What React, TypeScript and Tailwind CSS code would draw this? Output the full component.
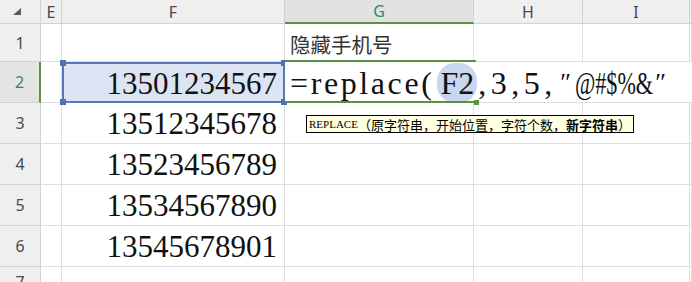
import React from "react";

const line = "border-r border-b border-[#dedede]";
const hdr = "bg-[#efefef] border-r border-b border-[#d2d2d2] flex items-center justify-center text-[16px] text-[#4a4a4a]";
const sans = { fontFamily: '"Noto Sans", "Noto Sans CJK SC", sans-serif' };
const serif = { fontFamily: '"Liberation Serif", serif' };

const numbers = ["13501234567", "13512345678", "13523456789", "13534567890", "13545678901"];

function Handle({ cls }: { cls: string }) {
  return <div className={`absolute w-[6px] h-[6px] bg-[#4f70b6] ${cls}`} />;
}

export default function App() {
  return (
    <div className="relative w-[692px] h-[282px] overflow-hidden bg-white" style={sans}>
      <div className="grid grid-cols-[41px_21px_223px_189px_109px_107px_1fr] grid-rows-[24px_38px_41px_41px_41px_41px_41px_41px]">
        {/* header row */}
        <div className={hdr}>
          <svg width="10" height="8" viewBox="0 0 10 8" className="mt-[1px] ml-[-6px]">
            <polygon points="9,0 9,7 1,7" fill="#5c5c5c" />
          </svg>
        </div>
        <div className={hdr}>E</div>
        <div className={hdr}>F</div>
        <div className="bg-[#e2e2e2] border-r border-[#d2d2d2] border-b-2 border-b-[#5a9440] flex items-center justify-center text-[16px] text-[#2c8a6c]">G</div>
        <div className={hdr}>H</div>
        <div className={hdr}>I</div>
        <div className={hdr}></div>

        {/* row 1 */}
        <div className={hdr}>1</div>
        <div className={line}></div>
        <div className={line}></div>
        <div className={`${line} flex items-center pl-[5px] pt-[4px] text-[20.5px] text-[#333]`} style={{ fontFamily: '"Noto Sans CJK SC", sans-serif' }}>隐藏手机号</div>
        <div className={line}></div>
        <div className={line}></div>
        <div className={line}></div>

        {/* row 2 */}
        <div className="bg-[#e4e4e4] border-b border-[#d2d2d2] border-r-2 border-r-[#5a9440] flex items-center justify-center text-[16px] text-[#2c8a6c]">2</div>
        <div className={line}></div>
        <div className="relative bg-[#dce4f4] border-2 border-[#5878b8] flex items-center justify-end pr-[6px] text-[31px] text-[#111]" style={serif}>
          <span className="leading-none pt-[1px]">{numbers[0]}</span>
          <Handle cls="-left-[4px] -top-[4px]" />
          <Handle cls="-right-[4px] -top-[4px]" />
          <Handle cls="-left-[4px] -bottom-[4px]" />
          <Handle cls="-right-[4px] -bottom-[4px]" />
        </div>
        <div className="col-span-4 relative bg-white border-b border-[#dedede] flex items-center pl-[5px]">
          <div className="absolute left-0 top-[-2px] w-[191px] h-[2px] bg-[#5a9440]" />
          <div className="absolute left-0 bottom-[-1px] w-[191px] h-[2px] bg-[#5a9440]" />
          <div className="absolute left-[189px] bottom-[-3px] w-[5px] h-[5px] bg-[#5a9440]" />
          <div className="whitespace-nowrap text-[32px] text-[#111] leading-none flex items-center pt-[2px]" style={serif}>
            <span className="tracking-[2.6px]">=replace(</span>
            <span className="ml-[3px] mr-[1px] pl-[3px] pr-[3px] py-[4px] rounded-[18px] bg-[#c9d6ef]">F2</span>
            <span className="tracking-[4.5px]">,3,5,</span>
            <span className="inline-block w-[18px] text-[26px] text-center">″</span>
            <span className="inline-block w-[78px] overflow-visible">
              <span className="inline-block origin-left scale-x-[0.69]">@#$%&amp;</span>
            </span>
            <span className="inline-block w-[16px] text-[26px] text-center">″</span>
          </div>
        </div>

        {/* rows 3-6 */}
        {numbers.slice(1).map((n, i) => (
          <React.Fragment key={n}>
            <div className={hdr}>{i + 3}</div>
            <div className={line}></div>
            <div className={`${line} flex items-center justify-end pr-[7px] text-[31px] text-[#111]`} style={serif}>
              <span className="leading-none pt-[1px]">{n}</span>
            </div>
            <div className={line}></div>
            <div className={line}></div>
            <div className={line}></div>
            <div className={line}></div>
          </React.Fragment>
        ))}

        {/* row 7 */}
        <div className={`${hdr} items-start pt-[3px]`}>7</div>
        <div className={line}></div>
        <div className={line}></div>
        <div className={line}></div>
        <div className={line}></div>
        <div className={line}></div>
        <div className={line}></div>
      </div>

      {/* tooltip */}
      <div className="absolute left-[306px] top-[115px] h-[18px] border border-black bg-[#ffffe1] flex items-center pl-[2px] pr-[2px] whitespace-nowrap text-[13px] leading-none text-black" style={{ fontFamily: '"Noto Sans CJK SC", sans-serif' }}>
        <span className="text-[11px]" style={serif}>REPLACE</span>
        <span>（原字符串，开始位置，字符个数，</span>
        <span className="font-bold">新字符串</span>
        <span>）</span>
      </div>
    </div>
  );
}
